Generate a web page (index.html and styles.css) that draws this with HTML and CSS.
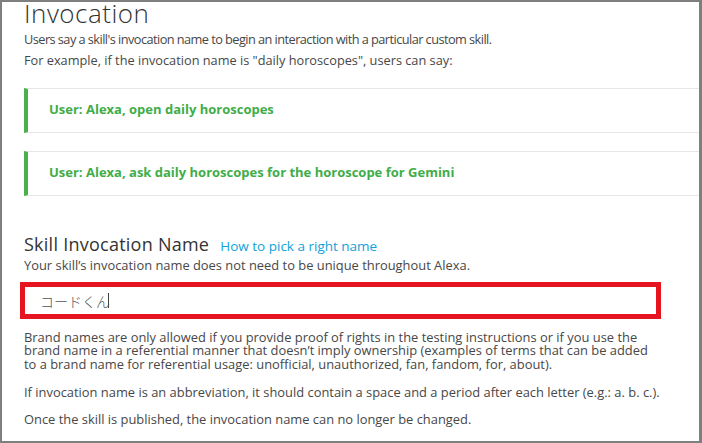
FILE: index.html
```html
<!DOCTYPE html>
<html lang="en">
<head>
<meta charset="utf-8">
<title>Invocation</title>
<link rel="stylesheet" href="styles.css">
</head>
<body>
<div class="frame">
  <main class="page">
    <h1 class="title">Invocation</h1>
    <p class="intro"><span class="intro-line intro-first">Users say a skill's invocation name to begin an interaction with a particular custom skill.</span><span class="intro-line">For example, if the invocation name is "daily horoscopes", users can say:</span></p>
    <div class="examples">
      <div class="example">User: Alexa, open daily horoscopes</div>
      <div class="example">User: Alexa, ask daily horoscopes for the horoscope for Gemini</div>
    </div>
    <section class="name-section">
      <div class="name-head">
        <h2 class="name-title">Skill Invocation Name</h2>
        <a class="help-link" href="#">How to pick a right name</a>
      </div>
      <p class="hint">Your skill’s invocation name does not need to be unique throughout Alexa.</p>
      <div class="input-box"><span class="input-value">コードくん</span><span class="caret"></span></div>
      <p class="note">Brand names are only allowed if you provide proof of rights in the testing instructions or if you use the<br>brand name in a referential manner that doesn’t imply ownership (examples of terms that can be added<br>to a brand name for referential usage: unofficial, unauthorized, fan, fandom, for, about).</p>
      <p class="note note-abbr">If invocation name is an abbreviation, it should contain a space and a period after each letter (e.g.: a. b. c.).</p>
      <p class="note note-last">Once the skill is published, the invocation name can no longer be changed.</p>
    </section>
  </main>
</div>
</body>
</html>
```

FILE: styles.css
```css
html, body {
  margin: 0;
  padding: 0;
  background: #ffffff;
}

body {
  font-family: "Open Sans", "Noto Sans CJK JP", sans-serif;
  color: #474747;
}

.frame {
  box-sizing: border-box;
  width: 702px;
  height: 443px;
  border: 2px solid #7f7f7f;
  border-right-width: 3px;
  border-bottom-width: 2px;
  overflow: hidden;
  background: #ffffff;
}

.page {
  padding-left: 22px;
}

.title {
  margin: -2px 0 0;
  font-size: 26px;
  font-weight: 300;
  line-height: 26px;
  letter-spacing: 0.5px;
  color: #333333;
}

.intro {
  margin: 3px 0 0;
  font-size: 12.75px;
  line-height: 20.5px;
  white-space: nowrap;
}

.intro-line {
  display: block;
}

.intro-first {
  letter-spacing: -0.55px;
}

.examples {
  margin-top: 18px;
  display: flex;
  flex-direction: column;
  gap: 18px;
  width: 720px;
}

.example {
  box-sizing: border-box;
  height: 45px;
  border-top: 1px solid #e6e6e6;
  border-bottom: 1px solid #e6e6e6;
  border-left: 4px solid #49b04c;
  padding: 10px 0 0 21px;
  font-size: 13px;
  line-height: 20px;
  font-weight: 700;
  color: #3fad48;
  white-space: nowrap;
}

.name-section {
  margin-top: 38px;
}

.name-head {
  display: flex;
  align-items: baseline;
  gap: 11px;
}

.name-title {
  margin: 0;
  font-size: 18px;
  font-weight: 400;
  line-height: 20px;
  letter-spacing: 0.25px;
  color: #333333;
}

.help-link {
  font-size: 13.5px;
  line-height: 20px;
  color: #11a2d8;
  text-decoration: none;
}

.hint {
  margin: 1px 0 0;
  font-size: 12.9px;
  line-height: 16px;
  white-space: nowrap;
}

.input-box {
  box-sizing: border-box;
  margin: 9px 0 0 -4px;
  width: 641px;
  height: 37px;
  border: 5px solid #e5141f;
  padding: 0 0 0 15px;
  display: flex;
  align-items: center;
  font-family: "Noto Sans CJK JP", sans-serif;
  font-size: 14px;
  font-weight: 300;
  color: #555555;
}

.caret {
  display: inline-block;
  width: 1px;
  height: 15px;
  margin-left: -2px;
  background: #444444;
}

.note {
  margin: 11.5px 0 0;
  font-size: 12.9px;
  line-height: 13.5px;
  white-space: nowrap;
}

.note-abbr {
  margin-top: 14.5px;
}

.note-last {
  margin-top: 13.5px;
}
```
